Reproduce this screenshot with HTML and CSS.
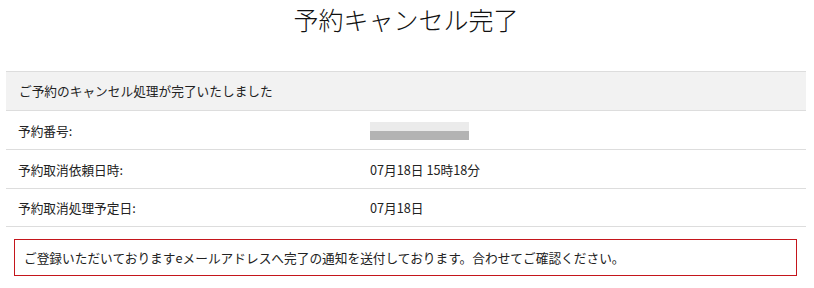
FILE: index.html
```html
<!DOCTYPE html>
<html lang="ja">

<head>
    <meta charset="UTF-8">
    <meta name="viewport" content="width=device-width, initial-scale=1.0">
    <title>予約キャンセル完了</title>
    <link rel="stylesheet" href="styles.css">
</head>

<body>
    <h1 class="page-title">予約キャンセル完了</h1>

    <div class="cancel-table">
        <div class="cancel-head">ご予約のキャンセル処理が完了いたしました</div>
        <div class="cancel-row">
            <div class="cancel-label">予約番号:</div>
            <div class="cancel-value"><span class="masked"></span></div>
        </div>
        <div class="cancel-row">
            <div class="cancel-label">予約取消依頼日時:</div>
            <div class="cancel-value">07月18日 15時18分</div>
        </div>
        <div class="cancel-row last">
            <div class="cancel-label">予約取消処理予定日:</div>
            <div class="cancel-value">07月18日</div>
        </div>
    </div>

    <div class="notice">ご登録いただいておりますeメールアドレスへ完了の通知を送付しております。合わせてご確認ください。</div>
</body>

</html>
```

FILE: styles.css
```css
body {
    margin: 0;
    padding: 0 8px 0 6px;
    font-family: "Noto Sans CJK JP", sans-serif;
    font-size: 12.7px;
    color: #222222;
    background-color: #ffffff;
}

.page-title {
    margin: 0;
    padding-top: 4px;
    height: 67px;
    font-family: "Liberation Serif", "Noto Sans CJK JP", serif;
    font-size: 25px;
    font-weight: 300;
    line-height: 36px;
    text-align: center;
    color: #111111;
}

.cancel-table {
    border-top: 1px solid #dddddd;
}

.cancel-head {
    height: 38px;
    line-height: 38px;
    padding-left: 13px;
    background-color: #f2f2f2;
    border-bottom: 1px solid #dddddd;
}

.cancel-row {
    display: flex;
    height: 38px;
    align-items: center;
    border-bottom: 1px solid #dddddd;
}

.cancel-row.last {
    height: 37px;
}

.cancel-label {
    width: 352px;
    padding-left: 12px;
}

.cancel-value {
    flex: 1;
}

.masked {
    display: inline-block;
    width: 99px;
    height: 18px;
    background: linear-gradient(#ebebeb 50%, #b3b3b3 50%);
    vertical-align: middle;
}

.notice {
    margin: 12px 9px 0 8px;
    height: 35px;
    line-height: 35px;
    padding-left: 9px;
    border: 1px solid #c4161c;
}
```
